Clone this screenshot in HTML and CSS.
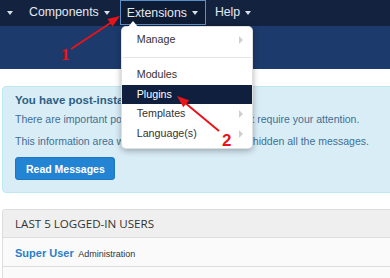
FILE: index.html
```html
<!DOCTYPE html>
<html>
<head>
<meta charset="utf-8">
<link rel="stylesheet" href="styles.css">
</head>
<body>
<div class="page">
  <nav class="navbar">
    <ul class="nav">
      <li class="nav-item first"><span class="caret"></span></li>
      <li class="nav-item comp">Components<span class="caret"></span></li>
      <li class="nav-item ext">Extensions<span class="caret"></span>
        <div class="dropdown">
          <span class="dd-arrow"></span>
          <ul class="dd-list">
            <li class="dd-item sub">Manage<span class="sub-caret"></span></li>
            <li class="dd-divider"></li>
            <li class="dd-item">Modules</li>
            <li class="dd-item active">Plugins</li>
            <li class="dd-item sub">Templates<span class="sub-caret"></span></li>
            <li class="dd-item sub">Language(s)<span class="sub-caret"></span></li>
          </ul>
        </div>
      </li>
      <li class="nav-item help">Help<span class="caret"></span></li>
    </ul>
  </nav>
  <header class="subhead"></header>
  <main class="content">
    <section class="alert">
      <h4 class="alert-title">You have post-installation messages</h4>
      <p class="alert-text">There are important post-installation messages that require your attention.</p>
      <p class="alert-text">This information area won't appear when you have hidden all the messages.</p>
      <button class="btn">Read Messages</button>
    </section>
    <section class="panel">
      <h2 class="panel-title">LAST 5 LOGGED-IN USERS</h2>
      <div class="panel-row"><a class="user">Super User</a> <span class="role">Administration</span></div>
      <div class="panel-row"></div>
    </section>
  </main>
  <svg class="annot" width="390" height="278" viewBox="0 0 390 278">
    <line x1="71" y1="49" x2="112" y2="22" stroke="#e8141a" stroke-width="2"/>
    <polygon points="120,16 112.5,26.4 107.5,19" fill="#e8141a"/>
    <text x="61" y="60" class="num1">1</text>
    <line x1="219" y1="131" x2="184" y2="102" stroke="#e8141a" stroke-width="2"/>
    <polygon points="177,96 189.1,100.2 183.3,107.2" fill="#e8141a"/>
    <text x="222" y="146" class="num2">2</text>
  </svg>
</div>
</body>
</html>
```
FILE: styles.css
```css
html, body {
  margin: 0;
  padding: 0;
  width: 390px;
  height: 278px;
  overflow: hidden;
  background: #ffffff;
  font-family: "Liberation Sans", Arial, sans-serif;
}
.page {
  position: relative;
  width: 390px;
  height: 278px;
  overflow: hidden;
}
.navbar {
  height: 26px;
  background: #13223f;
}
.nav {
  list-style: none;
  margin: 0;
  padding: 0 0 0 7px;
  display: flex;
  height: 26px;
}
.nav-item {
  position: relative;
  display: flex;
  align-items: center;
  height: 24px;
  font-size: 12.3px;
  color: #e3e9f1;
  white-space: nowrap;
}
.caret {
  display: inline-block;
  width: 0;
  height: 0;
  border-left: 3px solid transparent;
  border-right: 3px solid transparent;
  border-top: 4px solid #d8dfe8;
  margin-left: 5px;
  margin-top: 1px;
}
.nav-item.first .caret { margin-left: 0; }
.comp { margin-left: 16px; }
.ext {
  margin-left: 10px;
  border: 1px solid #5b8fc6;
  height: 23px;
  padding: 0 7px 0 6px;
  background: #0e1b34;
}
.help { margin-left: 9px; }

.dropdown {
  position: absolute;
  left: 0;
  top: 25px;
  width: 132px;
  background: #ffffff;
  border-radius: 5px;
  box-shadow: 0 2px 6px rgba(0, 0, 0, 0.3);
  border: 1px solid rgba(0, 0, 0, 0.12);
  box-sizing: border-box;
  padding: 3px 0 5px;
  z-index: 5;
}
.dd-arrow {
  position: absolute;
  left: 6px;
  top: -6px;
  width: 0;
  height: 0;
  border-left: 5.5px solid transparent;
  border-right: 5.5px solid transparent;
  border-bottom: 6px solid #ffffff;
}
.dd-list {
  list-style: none;
  margin: 0;
  padding: 0;
}
.dd-item {
  position: relative;
  height: 19.5px;
  line-height: 19.5px;
  padding-left: 15px;
  font-size: 10.7px;
  color: #333333;
}
.dd-item.active {
  background: #0f1f3d;
  color: #ffffff;
}
.sub-caret {
  position: absolute;
  right: 9px;
  top: 6px;
  width: 0;
  height: 0;
  border-top: 4px solid transparent;
  border-bottom: 4px solid transparent;
  border-left: 4px solid #cfcfcf;
}
.dd-divider {
  height: 1px;
  background: #e5e5e5;
  margin: 7px 1px 7.5px;
}

.subhead {
  height: 43px;
  background: #1c3a6b;
}
.content {
  padding: 17px 0 0 2px;
  width: 430px;
}
.alert {
  background: #d9edf7;
  border: 1px solid #bce8f1;
  border-radius: 4px;
  padding: 6px 13px 12px 12px;
}
.alert-title {
  margin: 0 0 5px;
  font-size: 11.5px;
  line-height: 14px;
  font-weight: bold;
  color: #2d5f82;
  white-space: nowrap;
}
.alert-text {
  margin: 0 0 7px;
  font-size: 10.5px;
  line-height: 14.5px;
  color: #3f6f92;
  white-space: nowrap;
}
.alert-text + .alert-text { margin-bottom: 9px; }
.btn {
  display: block;
  height: 23px;
  padding: 0 9px 0 10px;
  background: #2384d3;
  border: 1px solid #1f76bf;
  border-radius: 3px;
  color: #ffffff;
  font-family: "Liberation Sans", Arial, sans-serif;
  font-size: 10.5px;
  font-weight: bold;
}
.panel {
  margin-top: 16px;
  border: 1px solid #dddddd;
  border-bottom: none;
  border-radius: 3px 0 0 0;
}
.panel-title {
  margin: 0;
  height: 27px;
  line-height: 27px;
  padding-left: 12px;
  background: #efefef;
  border-bottom: 1px solid #dddddd;
  font-family: "Open Sans", "Liberation Sans", sans-serif;
  font-size: 11.6px;
  font-weight: normal;
  color: #333333;
}
.panel-row {
  height: 28px;
  line-height: 28px;
  padding-left: 12px;
  background: #fafafa;
  border-bottom: 1px solid #dddddd;
  white-space: nowrap;
}
.user {
  color: #2a7fc9;
  font-weight: bold;
  font-size: 11px;
}
.role {
  color: #333333;
  font-size: 9px;
}
.annot {
  position: absolute;
  left: 0;
  top: 0;
  pointer-events: none;
  z-index: 10;
}
.num1 {
  font-family: "Liberation Serif", serif;
  font-weight: bold;
  font-size: 17px;
  fill: #e8141a;
}
.num2 {
  font-family: "Liberation Sans Narrow", "Liberation Sans", sans-serif;
  font-weight: bold;
  font-size: 17px;
  fill: #e8141a;
}
```
